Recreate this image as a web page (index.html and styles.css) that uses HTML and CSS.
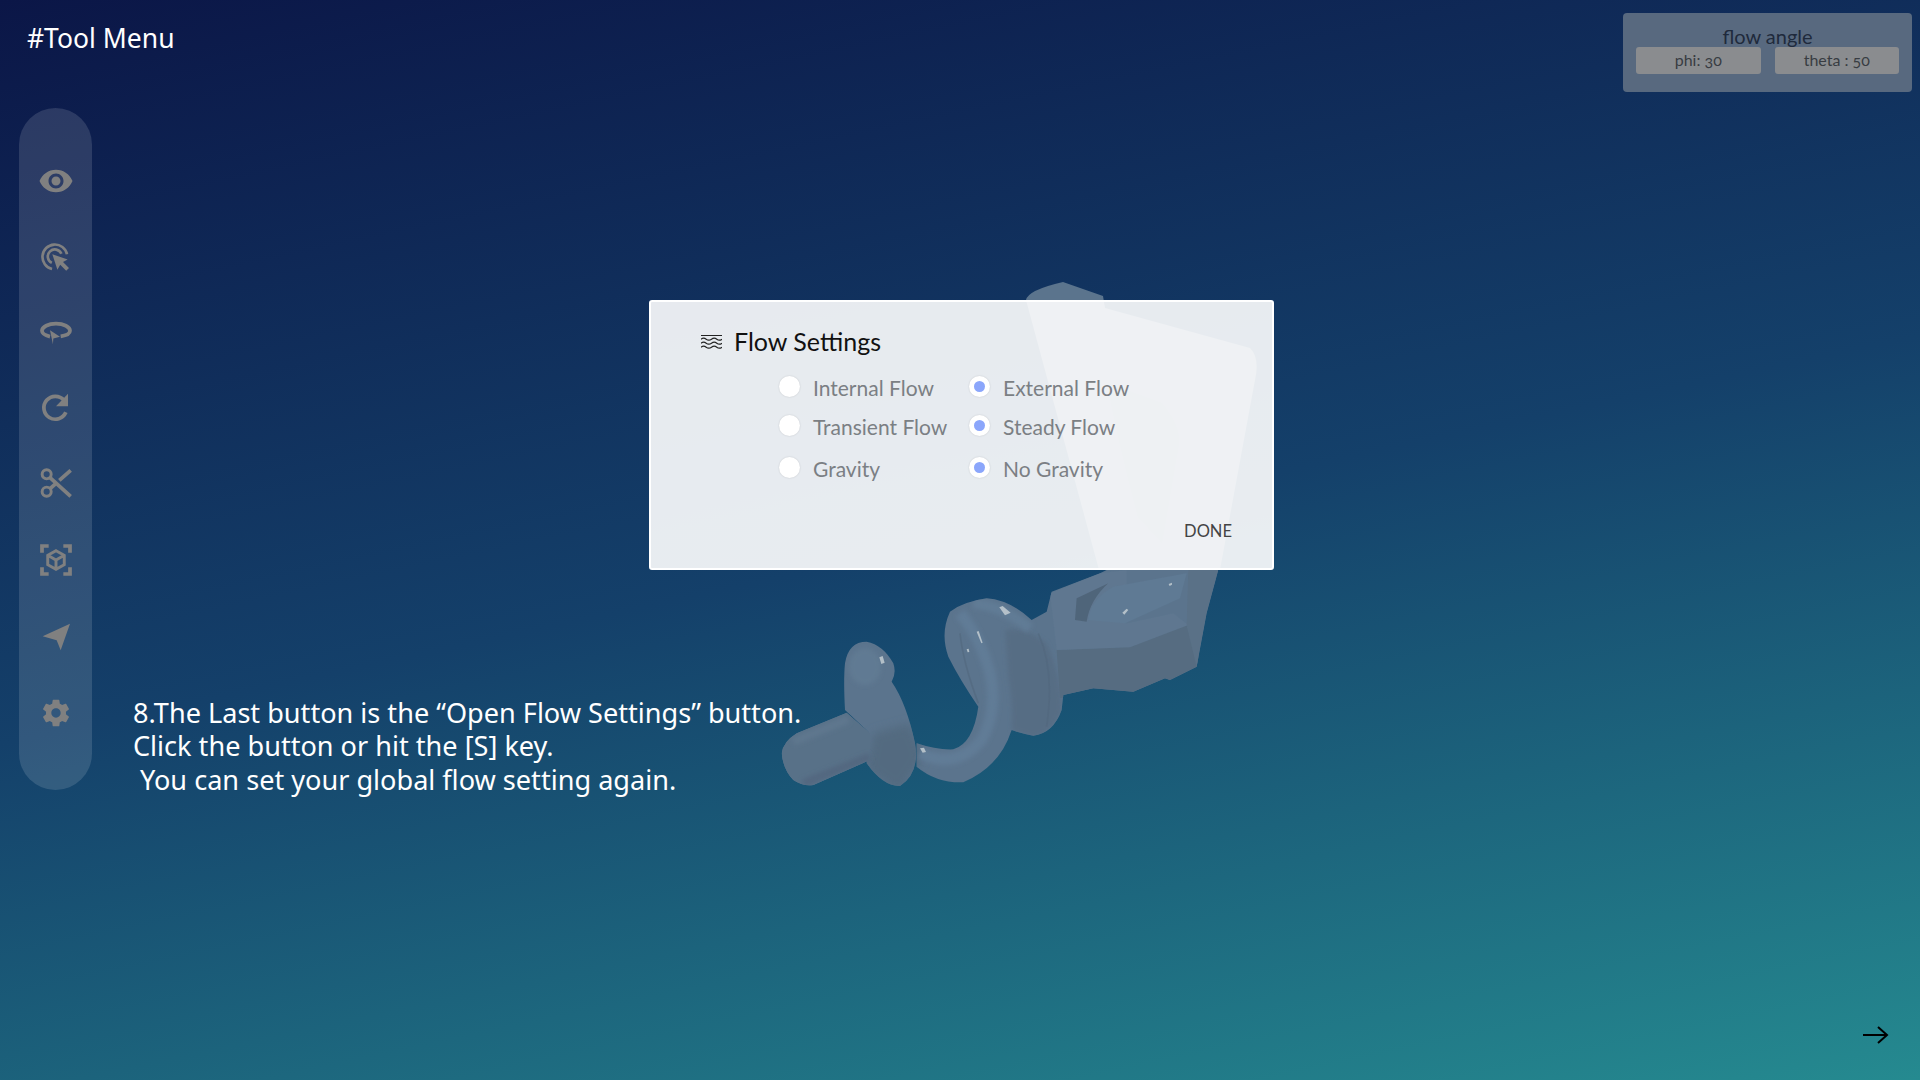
FILE: index.html
```html
<!DOCTYPE html>
<html lang="en">
<head>
<meta charset="utf-8">
<title>Tool Menu</title>
<link rel="stylesheet" href="styles.css">
</head>
<body>
<svg class="model" viewBox="0 0 1920 1080" aria-hidden="true">
  <defs>
    <filter id="soft" x="-30%" y="-30%" width="160%" height="160%"><feGaussianBlur stdDeviation="7"/></filter>
    <filter id="softer" x="-30%" y="-30%" width="160%" height="160%"><feGaussianBlur stdDeviation="14"/></filter>
    <filter id="edge" x="-10%" y="-10%" width="120%" height="120%"><feGaussianBlur stdDeviation="1.8"/></filter>
    <clipPath id="sil">
      <path d="M470 520Q530 540 580 538Q640 520 655 410Q600 330 565 260Q540 190 570 125Q610 95 680 85Q750 90 815 150L860 125L875 65L1020 10L1040 0L1375 0L1340 130L1310 290L1230 330L1215 325L1120 365L1000 355L910 375L905 420Q880 490 820 497Q780 490 755 480Q720 590 610 637Q530 640 470 590Z"/>
      <path d="M255 420Q250 330 255 280Q265 215 320 215Q370 225 400 280Q410 310 395 335Q440 400 465 520Q480 610 420 648Q370 650 320 580L330 490Z"/>
      <path d="M65 550Q70 515 110 490L260 428L330 490L330 570L160 645Q130 650 100 630Q70 600 65 550Z"/>
    </clipPath>
  </defs>
  <path class="m-base" d="M1026 300Q1028 290 1063 282L1103 296L1105 308L1250 348Q1260 358 1255 380L1220 570L1099 570Z"/>
  <path class="m-shade" d="M1107 383L1162 403Q1180 425 1179 443L1162 543L1138 517Q1120 450 1107 383Z"/>
  <g transform="translate(760 570) scale(.3333)">
    <g clip-path="url(#sil)">
      <rect class="m-base" x="0" y="0" width="1400" height="700"/>
      <path class="m-disc-low" filter="url(#softer)" d="M340 490L450 460L490 560L420 670L320 600Z"/>
      <ellipse class="m-light" filter="url(#soft)" cx="315" cy="290" rx="48" ry="55"/>
      <path class="m-stem" filter="url(#edge)" d="M50 550Q70 515 110 490L260 428L330 490L330 570L160 660L70 640Z"/>
      <path class="m-stem-top" fill="none" filter="url(#soft)" d="M100 515L265 448"/>
      <path class="m-stem-low" fill="none" filter="url(#soft)" d="M130 640L330 560"/>
      <path class="m-tube" fill="none" filter="url(#soft)" d="M480 550Q590 600 665 510Q715 420 690 310Q660 200 600 130"/>
      <path class="m-ring" filter="url(#soft)" d="M735 180Q800 170 860 220Q905 320 905 420Q880 490 820 500Q780 490 755 480Q760 400 745 320Q740 240 735 180Z"/>
      <path class="m-rim" fill="none" filter="url(#edge)" d="M835 190Q885 300 860 470"/>
      <path class="m-rim" fill="none" filter="url(#edge)" d="M600 190Q610 280 655 400"/>
      <path class="m-band" fill="none" filter="url(#soft)" d="M640 100Q730 110 810 175"/>
      <path class="m-block-low" filter="url(#edge)" d="M890 240L1110 230L1280 165L1330 300L1230 340L1120 375L1000 365L900 385Z"/>
      <path class="m-block-top" filter="url(#edge)" d="M870 70L1020 10L1100 0L1100 160L1240 130L1285 165L1110 232L890 240Z"/>
      <path class="m-slot" filter="url(#edge)" d="M945 150L950 85L1045 40Q990 90 980 155Z"/>
      <path class="m-hook" filter="url(#edge)" d="M985 150Q990 90 1060 50L1280 10L1260 85L1095 160Z"/>
      <path class="m-side" filter="url(#edge)" d="M1285 0L1375 0L1340 130L1310 290L1280 165Z"/>
    </g>
    <path class="m-spec" d="M358 262L368 258L374 278L364 282Z"/>
    <path class="m-spec" d="M650 185L656 183L668 218L664 220Z"/>
    <path class="m-spec" d="M620 238L626 236L628 246L623 247Z"/>
    <path class="m-spec" d="M718 112L728 108L752 128L735 136Z"/>
    <path class="m-spec" d="M1087 128L1100 116L1105 120L1093 134Z"/>
    <path class="m-spec" d="M1226 42L1236 38L1236 44L1229 48Z"/>
    <path class="m-spec" d="M480 535L492 533L498 546L488 548Z"/>
  </g>
</svg>

<header class="topbar">
  <h1 class="title">#Tool Menu</h1>
  <section class="angle-panel">
    <div class="angle-title">flow angle</div>
    <div class="angle-values">
      <div class="angle-value">phi: 30</div>
      <div class="angle-value">theta : 50</div>
    </div>
  </section>
</header>

<main class="workspace">
  <nav class="toolbar">
    <svg class="tool" viewBox="1.33 1.33 21.33 21.33"><path class="fill" d="M12 4.5C7 4.5 2.73 7.61 1 12c1.73 4.39 6 7.5 11 7.5s9.27-3.11 11-7.5c-1.73-4.39-6-7.5-11-7.5zM12 17c-2.76 0-5-2.24-5-5s2.24-5 5-5 5 2.24 5 5-2.24 5-5 5zm0-8c-1.66 0-3 1.34-3 3s1.34 3 3 3 3-1.34 3-3-1.34-3-3-3z"/></svg>
    <svg class="tool" viewBox="0.75 0 24 24"><path class="line" d="M9.8 21A9.3 9.3 0 1 1 21 10"/><path class="line" d="M9.6 16.4A5.3 5.3 0 1 1 16.8 9.6"/><path class="fill" d="M10 10L21.5 13.8L18 15.8L22.5 20.3L20.4 22.4L15.9 17.9L13.8 21.5Z"/></svg>
    <svg class="tool" viewBox="0 2.8 24 24"><path class="line wide" d="M7.5 17.5C3.5 16.6 1.5 15 1.5 13.2C1.5 10.2 6.2 7.8 12 7.8S22.5 10.2 22.5 13.2C22.5 15 20.2 16.7 15.5 17.4"/><path class="fill" d="M7.5 12.8L15 17.6L10 19L9.7 23.2Z"/></svg>
    <svg class="tool" viewBox="0 1 24 24"><path class="line wide" d="M19.4 15.5A8.6 8.6 0 1 1 18 6.4"/><path class="fill" d="M21 1.5V11H12Z"/></svg>
    <svg class="tool" viewBox="0 1.5 24 24"><circle class="line thick" cx="5" cy="5.5" r="3.4"/><circle class="line thick" cx="5" cy="18.5" r="3.4"/><path class="line wide" d="M7.5 8L23 22M7.8 16L12 12.2M14.5 10L23 2.5"/></svg>
    <svg class="tool" viewBox="0 0.75 24 24"><path class="line wide" d="M1.5 6.5V1.5H6.5M17.5 1.5H22.5V6.5M22.5 17.5V22.5H17.5M6.5 22.5H1.5V17.5"/><path class="line thick" d="M12 5L18.2 8.5V15.5L12 19L5.8 15.5V8.5ZM5.8 8.5L12 12L18.2 8.5M12 12V19"/></svg>
    <svg class="tool" viewBox="0 1 24 24"><path class="fill" d="M2 12.5L22.5 3L15.5 23L12.5 15.5Z"/></svg>
    <svg class="tool" viewBox="0 0 24 24"><path class="fill" d="M19.43 12.98c.04-.32.07-.64.07-.98s-.03-.66-.07-.98l2.11-1.65c.19-.15.24-.42.12-.64l-2-3.46c-.12-.22-.39-.3-.61-.22l-2.49 1c-.52-.4-1.08-.73-1.69-.98l-.38-2.65C14.46 2.18 14.25 2 14 2h-4c-.25 0-.46.18-.49.42l-.38 2.65c-.61.25-1.17.59-1.69.98l-2.49-1c-.23-.09-.49 0-.61.22l-2 3.46c-.13.22-.07.49.12.64l2.11 1.65c-.04.32-.07.65-.07.98s.03.66.07.98l-2.11 1.65c-.19.15-.24.42-.12.64l2 3.46c.12.22.39.3.61.22l2.49-1c.52.4 1.08.73 1.69.98l.38 2.65c.03.24.24.42.49.42h4c.25 0 .46-.18.49-.42l.38-2.65c.61-.25 1.17-.59 1.69-.98l2.49 1c.23.09.49 0 .61-.22l2-3.46c.12-.22.07-.49-.12-.64l-2.11-1.65zM12 15.5c-1.93 0-3.5-1.57-3.5-3.5s1.57-3.5 3.5-3.5 3.5 1.57 3.5 3.5-1.57 3.5-3.5 3.5z"/></svg>
  </nav>
  <p class="guide">8.The Last button is the “Open Flow Settings” button.<br>Click the button or hit the [S] key.<br><span class="guide-indent">You can set your global flow setting again.</span></p>
</main>

<section class="dialog">
  <div class="dialog-head">
    <svg class="waves" viewBox="0 0 21 15"><path d="M0 1.5h21M0 5.2q2.6-2 5.2 0t5.3 0 5.3 0 5.2 0M0 9.2q2.6-2 5.2 0t5.3 0 5.3 0 5.2 0M0 13.2q2.6-2 5.2 0t5.3 0 5.3 0 5.2 0"/></svg>
    <h2 class="dialog-title">Flow Settings</h2>
  </div>
  <div class="options">
    <label class="option"><span class="radio"></span>Internal Flow</label>
    <label class="option"><span class="radio on"></span>External Flow</label>
    <label class="option"><span class="radio"></span>Transient Flow</label>
    <label class="option"><span class="radio on"></span>Steady Flow</label>
    <label class="option"><span class="radio"></span>Gravity</label>
    <label class="option"><span class="radio on"></span>No Gravity</label>
  </div>
  <div class="dialog-actions"><span class="done">DONE</span></div>
</section>

<svg class="next" viewBox="0 0 26 18"><path d="M0 9H24M15 1L24 9L15 17"/></svg>
</body>
</html>
```

FILE: styles.css
```css
* { box-sizing: border-box; }

html, body { height: 100%; }

body {
  margin: 0;
  height: 1080px;
  overflow: hidden;
  position: relative;
  display: flex;
  flex-direction: column;
  background: linear-gradient(168deg, #0b1647 0%, #14406a 50%, #258a90 100%);
  font-family: "Noto Sans", sans-serif;
  color: #fff;
}

.model {
  position: absolute;
  inset: 0;
  width: 1920px;
  height: 1080px;
}
.m-base { fill: #5b748d; }
.m-shade { fill: #526a80; opacity: .6; }
.m-disc-low { fill: #536a80; }
.m-light { fill: #607a93; }
.m-stem { fill: #587188; }
.m-stem-top { stroke: #5e778e; stroke-width: 24; }
.m-stem-low { stroke: #526880; stroke-width: 24; }
.m-tube { stroke: #617b96; stroke-width: 34; }
.m-ring { fill: #566d84; }
.m-rim { stroke: #52687e; stroke-width: 5; opacity: .6; }
.m-band { stroke: #617b95; stroke-width: 30; }
.m-block-low { fill: #566c81; }
.m-block-top { fill: #5e7790; }
.m-slot { fill: #50657a; }
.m-hook { fill: #5f7a94; }
.m-side { fill: #5a7187; }
.m-spec { fill: #c9d2d6; opacity: .8; }

.topbar {
  position: relative;
  display: flex;
  justify-content: space-between;
  align-items: flex-start;
  padding: 13px 8px 0 27px;
}

.title {
  margin: 7px 0 0;
  font-size: 26.5px;
  font-weight: 400;
  line-height: 36px;
}

.angle-panel {
  width: 289px;
  height: 79px;
  padding: 13px 13px 0;
  border-radius: 4px;
  background: #58697f;
  font-family: "Lato", sans-serif;
  font-variant-numeric: oldstyle-nums;
  color: #1f2a3c;
  text-align: center;
}

.angle-title {
  font-size: 20px;
  line-height: 21px;
  height: 21px;
}

.angle-values {
  display: flex;
  gap: 14px;
}

.angle-value {
  flex: 1;
  height: 27px;
  border-radius: 3px;
  background: #8a8c8f;
  color: #383c42;
  font-size: 16px;
  line-height: 25px;
}

.workspace {
  position: relative;
  display: flex;
  align-items: flex-end;
  gap: 41px;
  padding: 16px 0 0 19px;
}

.toolbar {
  display: flex;
  flex-direction: column;
  align-items: center;
  gap: 44px;
  width: 73px;
  height: 682px;
  padding-top: 57px;
  border-radius: 37px;
  background: rgba(255, 255, 255, .13);
}

.tool { width: 32px; height: 32px; flex: none; overflow: visible; }
.fill { fill: #808080; }
.line { fill: none; stroke: #808080; stroke-width: 2; }
.thick { stroke-width: 2.2; }
.wide { stroke-width: 2.8; }

.guide {
  margin: 0 0 -6px;
  font-size: 27.1px;
  line-height: 33.5px;
  white-space: nowrap;
}
.guide-indent { margin-left: 7px; }

.dialog {
  position: absolute;
  left: 649px;
  top: 300px;
  width: 625px;
  height: 270px;
  padding: 24px 40px 0 50px;
  border-radius: 3px;
  border: 2px solid #fff;
  background: rgba(255, 255, 255, .9);
  font-family: "Lato", sans-serif;
}

.dialog-head {
  display: flex;
  align-items: center;
  gap: 12px;
  height: 30px;
}

.waves { width: 21px; height: 15px; flex: none; fill: none; stroke: #222; stroke-width: 1.2; }

.dialog-title {
  margin: 0;
  font-size: 25px;
  font-weight: 400;
  color: #111;
}

.options {
  display: grid;
  grid-template-columns: 190px 190px;
  grid-template-rows: 39px 39px 44px;
  margin: 12px 0 0 78px;
}

.option {
  display: flex;
  align-items: center;
  gap: 13px;
  font-size: 21px;
  color: #7b7f84;
}

.radio {
  position: relative;
  width: 21px;
  height: 21px;
  border-radius: 50%;
  background: #fff;
  box-shadow: 0 0 2px rgba(0, 0, 0, .15);
  flex: none;
  top: -1px;
}
.radio.on::after {
  content: "";
  position: absolute;
  inset: 5px;
  border-radius: 50%;
  background: #8ba6fb;
}

.dialog-actions {
  display: flex;
  justify-content: flex-end;
  margin-top: 31px;
}

.done {
  font-size: 16.5px;
  color: #444;
}

.next {
  position: absolute;
  right: 31px;
  bottom: 36px;
  width: 26px;
  height: 18px;
  fill: none;
  stroke: #000;
  stroke-width: 2;
}
```
